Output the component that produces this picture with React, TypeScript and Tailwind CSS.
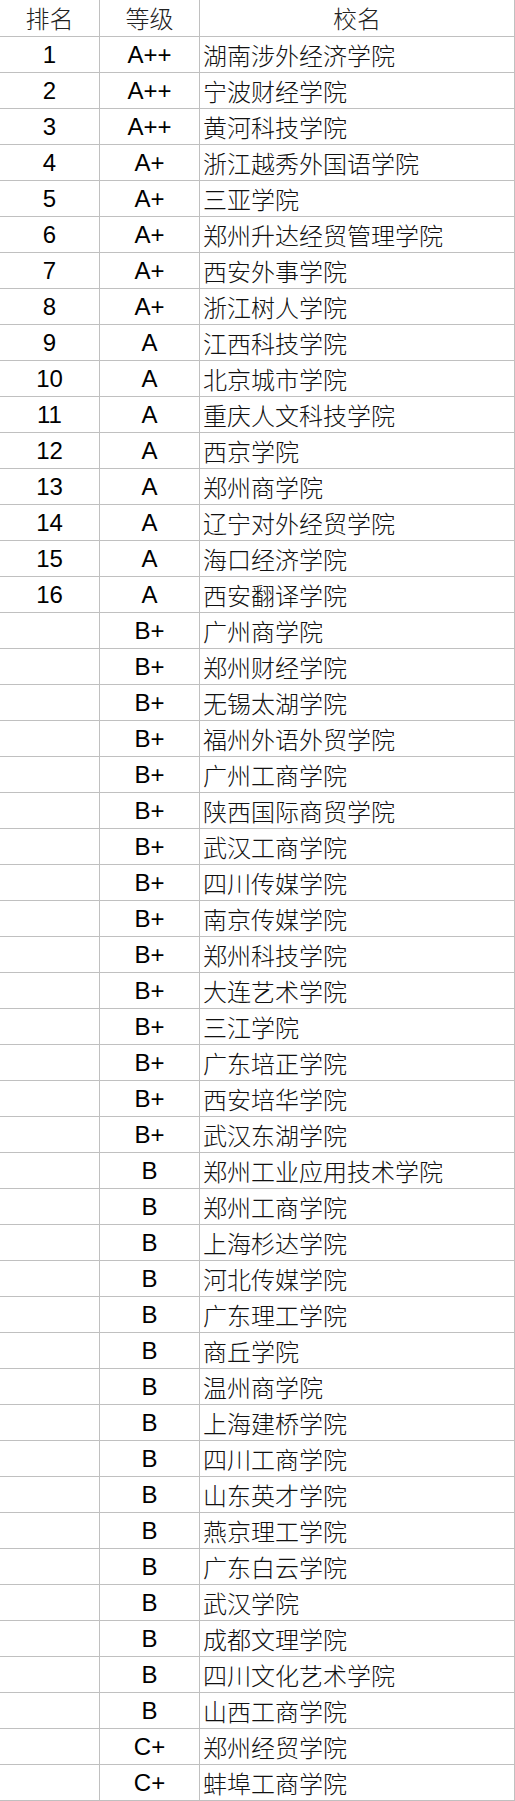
import React from "react";

const rows: [string, string, string][] = [
  ["1", "A++", "湖南涉外经济学院"],
  ["2", "A++", "宁波财经学院"],
  ["3", "A++", "黄河科技学院"],
  ["4", "A+", "浙江越秀外国语学院"],
  ["5", "A+", "三亚学院"],
  ["6", "A+", "郑州升达经贸管理学院"],
  ["7", "A+", "西安外事学院"],
  ["8", "A+", "浙江树人学院"],
  ["9", "A", "江西科技学院"],
  ["10", "A", "北京城市学院"],
  ["11", "A", "重庆人文科技学院"],
  ["12", "A", "西京学院"],
  ["13", "A", "郑州商学院"],
  ["14", "A", "辽宁对外经贸学院"],
  ["15", "A", "海口经济学院"],
  ["16", "A", "西安翻译学院"],
  ["", "B+", "广州商学院"],
  ["", "B+", "郑州财经学院"],
  ["", "B+", "无锡太湖学院"],
  ["", "B+", "福州外语外贸学院"],
  ["", "B+", "广州工商学院"],
  ["", "B+", "陕西国际商贸学院"],
  ["", "B+", "武汉工商学院"],
  ["", "B+", "四川传媒学院"],
  ["", "B+", "南京传媒学院"],
  ["", "B+", "郑州科技学院"],
  ["", "B+", "大连艺术学院"],
  ["", "B+", "三江学院"],
  ["", "B+", "广东培正学院"],
  ["", "B+", "西安培华学院"],
  ["", "B+", "武汉东湖学院"],
  ["", "B", "郑州工业应用技术学院"],
  ["", "B", "郑州工商学院"],
  ["", "B", "上海杉达学院"],
  ["", "B", "河北传媒学院"],
  ["", "B", "广东理工学院"],
  ["", "B", "商丘学院"],
  ["", "B", "温州商学院"],
  ["", "B", "上海建桥学院"],
  ["", "B", "四川工商学院"],
  ["", "B", "山东英才学院"],
  ["", "B", "燕京理工学院"],
  ["", "B", "广东白云学院"],
  ["", "B", "武汉学院"],
  ["", "B", "成都文理学院"],
  ["", "B", "四川文化艺术学院"],
  ["", "B", "山西工商学院"],
  ["", "C+", "郑州经贸学院"],
  ["", "C+", "蚌埠工商学院"],
];

const latin = "font-['Liberation_Sans','Noto_Sans_CJK_SC',sans-serif]";
const cjk = "font-['Noto_Sans_CJK_SC',sans-serif] font-light";

export default function App() {
  return (
    <div className="w-[515px] bg-white text-black">
      <div className="flex h-[37px] border-b border-[#c0c0c0]">
        <div className={`w-[100px] border-r border-[#c0c0c0] flex items-center justify-center text-[24px] leading-none text-[#222] ${cjk}`}>
          排名
        </div>
        <div className={`w-[100px] border-r border-[#c0c0c0] flex items-center justify-center text-[24px] leading-none text-[#222] ${cjk}`}>
          等级
        </div>
        <div className={`w-[315px] border-r border-[#c0c0c0] flex items-center justify-center text-[24px] leading-none text-[#222] ${cjk}`}>
          校名
        </div>
      </div>
      {rows.map(([rank, grade, name], i) => (
        <div key={i} className="flex h-[36px] border-b border-[#c0c0c0]">
          <div className={`w-[100px] border-r border-[#c0c0c0] flex items-center justify-center text-[24px] leading-none ${latin}`}>
            {rank}
          </div>
          <div className={`w-[100px] border-r border-[#c0c0c0] flex items-center justify-center text-[24px] leading-none ${latin}`}>
            {grade}
          </div>
          <div className={`w-[315px] border-r border-[#c0c0c0] flex items-center pl-[3px] text-[24px] leading-none text-[#111] ${cjk}`}>
            {name}
          </div>
        </div>
      ))}
    </div>
  );
}
